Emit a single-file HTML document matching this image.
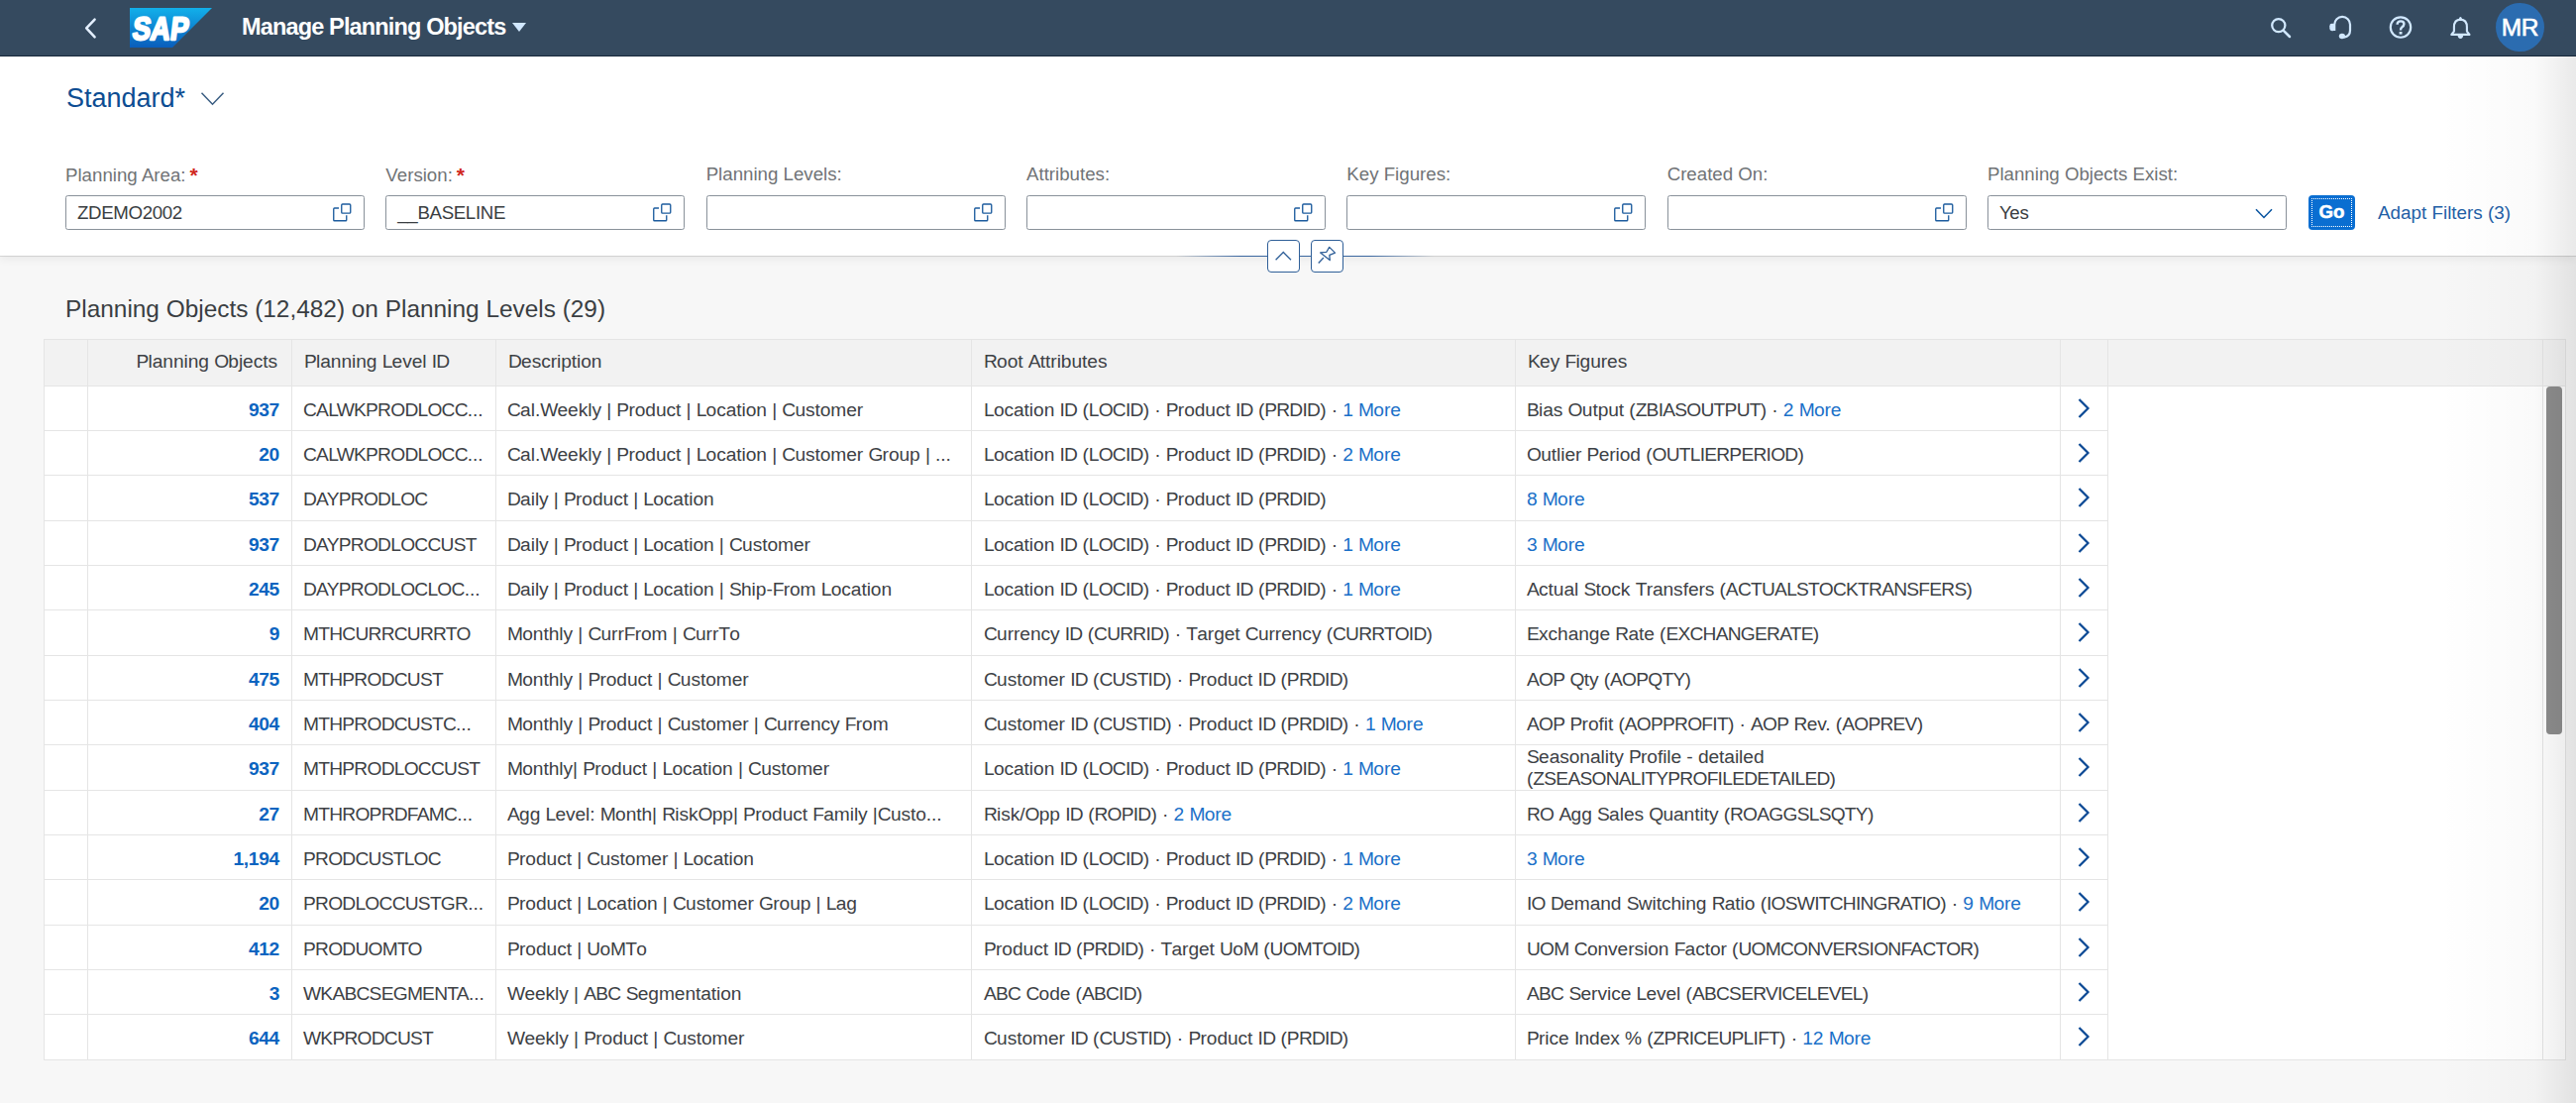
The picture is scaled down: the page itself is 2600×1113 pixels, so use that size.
<!DOCTYPE html>
<html><head><meta charset="utf-8">
<style>
*{box-sizing:border-box;margin:0;padding:0}
html,body{width:2600px;height:1113px;overflow:hidden;background:#f7f7f7;font-family:"Liberation Sans",sans-serif;color:#32363a}
.abs{position:absolute}
#shell{position:absolute;left:0;top:0;width:2600px;height:57px;background:#354a5f;border-bottom:1px solid #17283a}
#hdr{position:absolute;left:0;top:57px;width:2600px;height:201px;background:#fff;box-shadow:0 1px 0 rgba(0,0,0,0.115),0 3px 9px rgba(0,0,0,0.065)}
.lbl{position:absolute;top:165px;font-size:18.7px;color:#707376;white-space:nowrap;line-height:22px}
.req{color:#d0271d;font-size:21px;font-weight:bold;line-height:22px;margin-left:4px;position:relative;top:1px}
.inp{position:absolute;top:197px;width:302px;height:35px;border:1px solid #89919a;border-radius:2.5px;background:#fff}
.inp .v{position:absolute;left:11px;top:6px;font-size:18.7px;line-height:22px;color:#3a3e42;letter-spacing:-0.35px}
.vh{position:absolute;right:12px;top:7px;width:20px;height:20px}

.ttl{position:absolute;left:66px;top:296.5px;font-size:24.4px;line-height:30px;color:#3a3e42;white-space:nowrap;letter-spacing:0px}
.th{position:absolute;background:#f2f2f2;border-top:1px solid #e5e5e5;border-bottom:1px solid #e5e5e5}
#tblbody{position:absolute;left:44px;top:390px;width:2546px;height:680px;background:#fff;border-bottom:1px solid #e5e5e5}
.vl{position:absolute;width:1px;background:#e5e5e5}
.ht{position:absolute;top:354px;font-size:19.2px;line-height:22px;letter-spacing:-0.08px;color:#3d4145;white-space:nowrap}
.tr{position:absolute;left:44px;width:2084px;border-bottom:1px solid #e5e5e5}
.td{position:absolute;top:12.7px;font-size:19.2px;line-height:22px;letter-spacing:-0.08px;color:#3d4145;white-space:nowrap}
.td.two{top:1px;line-height:21.6px}
.num{position:absolute;left:44px;top:12.7px;text-align:right;font-size:19.2px;line-height:22px;letter-spacing:-0.3px;font-weight:bold;color:#0b64c0;white-space:nowrap}
.lk{color:#1a70c8}
i{font-style:normal;letter-spacing:-0.75px}
.nav{position:absolute;left:2052px;top:11px;width:14px;height:22px}
.sb{position:absolute;left:2570px;top:390px;width:16px;height:351px;background:#8d8d8d;border-radius:4px}
#edge{position:absolute;left:2460px;top:57px;width:140px;height:1056px;background:linear-gradient(to right,rgba(0,0,0,0) 0%,rgba(0,0,0,0.02) 70%,rgba(0,0,0,0.085) 100%)}
</style></head>
<body>
<div id="shell">
  <svg class="abs" style="left:84px;top:17px" width="14" height="23" viewBox="0 0 14 23"><path d="M11.6 2.6 L3.2 11.4 L11.6 20.4" fill="none" stroke="#e4f0ff" stroke-width="2.5" stroke-linecap="round" stroke-linejoin="round"/></svg>
  <svg class="abs" style="left:131px;top:8px" width="84" height="40" viewBox="0 0 84 40">
    <defs><linearGradient id="sg" x1="0" y1="0" x2="0" y2="1"><stop offset="0" stop-color="#12b0ea"/><stop offset="1" stop-color="#0a5dbb"/></linearGradient></defs>
    <path d="M0 0 H83 L43 40 H0 Z" fill="url(#sg)"/><text x="5.6" y="31.6" transform="skewX(-7)" font-family="Liberation Sans" font-weight="bold" font-size="32.5" fill="#fff" stroke="#fff" stroke-width="2.3" stroke-linejoin="round" textLength="56.5" lengthAdjust="spacingAndGlyphs">SAP</text>
  </svg>
  <div class="abs" style="left:244px;top:13px;font-size:23.5px;letter-spacing:-0.85px;font-weight:bold;color:#fff;line-height:28px;white-space:nowrap">Manage Planning Objects</div>
  <svg class="abs" style="left:517px;top:23px" width="14" height="9" viewBox="0 0 14 9"><path d="M0 0 H14 L7 9 Z" fill="#d1e8ff"/></svg>
  <svg class="abs" style="left:2285px;top:10px" width="35" height="35" viewBox="0 0 35 35"><circle cx="14.8" cy="15.6" r="6.6" fill="none" stroke="#d1e8ff" stroke-width="2.25"/><path d="M19.8 20.8 L26 27" stroke="#d1e8ff" stroke-width="2.5" stroke-linecap="round"/></svg>
  <svg class="abs" style="left:2345px;top:10px" width="35" height="35" viewBox="0 0 35 35"><path d="M11.2 21 V14.8 A7.9 7.9 0 0 1 27 14.8 V20.5 Q27 26.6 21 27.6" fill="none" stroke="#d1e8ff" stroke-width="2.2"/><rect x="6.3" y="13.8" width="5.6" height="7.4" rx="2.4" fill="#d1e8ff"/><ellipse cx="18.9" cy="26.5" rx="3.1" ry="2.7" fill="#d1e8ff"/></svg>
  <svg class="abs" style="left:2405px;top:10px" width="35" height="35" viewBox="0 0 35 35"><circle cx="18" cy="17.55" r="10.2" fill="none" stroke="#d1e8ff" stroke-width="2.2"/><path d="M14.6 14.8 Q14.6 11.4 18.1 11.4 Q21.4 11.4 21.4 14.3 Q21.4 16.2 19.3 17.4 Q18 18.2 18 20.4" fill="none" stroke="#d1e8ff" stroke-width="2.4" stroke-linecap="butt"/><rect x="16.6" y="22" width="2.9" height="2.6" fill="#d1e8ff"/></svg>
  <svg class="abs" style="left:2465px;top:10px" width="35" height="35" viewBox="0 0 35 35"><path d="M16.6 10.6 Q17 7 18.4 7 Q19.8 7 20.2 10.6 Z" fill="#d1e8ff"/><path d="M18.4 9.6 Q24.9 9.9 24.9 17.3 V21.6 L27.5 24.9 H9.3 L11.9 21.6 V17.3 Q11.9 9.9 18.4 9.6 Z" fill="none" stroke="#d1e8ff" stroke-width="2.1" stroke-linejoin="round"/><path d="M15.6 25.8 H21.2 Q21 28.9 18.4 28.9 Q15.8 28.9 15.6 25.8 Z" fill="#d1e8ff"/></svg>
  <div class="abs" style="left:2519px;top:3px;width:49px;height:49px;border-radius:50%;background:#2b6cb0"></div>
  <div class="abs" style="left:2519px;top:12.5px;width:49px;text-align:center;font-size:24.5px;line-height:30px;color:#fff;letter-spacing:-0.3px;-webkit-text-stroke:0.6px #fff">MR</div>
</div>
<div id="hdr"></div>
<div class="abs" style="left:67px;top:83px;font-size:27px;line-height:32px;color:#0d4d92;white-space:nowrap">Standard*</div>
<svg class="abs" style="left:202px;top:92px" width="25" height="16" viewBox="0 0 25 16"><path d="M1.5 1.8 L12.5 13.2 L23.5 1.8" fill="none" stroke="#3a5d82" stroke-width="1.5"/></svg>
<div class="lbl" style="left:66.0px">Planning Area:<span class="req">*</span></div>
<div class="inp" style="left:66.0px"><div class="v">ZDEMO2002</div><svg class="vh" viewBox="0 0 20 20"><path d="M7 5 H2.6 Q1.75 5 1.75 5.9 V16.9 Q1.75 17.75 2.6 17.75 H13.9 Q14.75 17.75 14.75 16.9 V12.3" fill="none" stroke="#1d5c9e" stroke-width="1.35"/><rect x="9.75" y="0.95" width="9" height="9.2" rx="1" fill="none" stroke="#1d5c9e" stroke-width="1.35"/></svg></div>
<div class="lbl" style="left:389.33px">Version:<span class="req">*</span></div>
<div class="inp" style="left:389.33px"><div class="v">__BASELINE</div><svg class="vh" viewBox="0 0 20 20"><path d="M7 5 H2.6 Q1.75 5 1.75 5.9 V16.9 Q1.75 17.75 2.6 17.75 H13.9 Q14.75 17.75 14.75 16.9 V12.3" fill="none" stroke="#1d5c9e" stroke-width="1.35"/><rect x="9.75" y="0.95" width="9" height="9.2" rx="1" fill="none" stroke="#1d5c9e" stroke-width="1.35"/></svg></div>
<div class="lbl" style="left:712.66px">Planning Levels:</div>
<div class="inp" style="left:712.66px"><svg class="vh" viewBox="0 0 20 20"><path d="M7 5 H2.6 Q1.75 5 1.75 5.9 V16.9 Q1.75 17.75 2.6 17.75 H13.9 Q14.75 17.75 14.75 16.9 V12.3" fill="none" stroke="#1d5c9e" stroke-width="1.35"/><rect x="9.75" y="0.95" width="9" height="9.2" rx="1" fill="none" stroke="#1d5c9e" stroke-width="1.35"/></svg></div>
<div class="lbl" style="left:1035.99px">Attributes:</div>
<div class="inp" style="left:1035.99px"><svg class="vh" viewBox="0 0 20 20"><path d="M7 5 H2.6 Q1.75 5 1.75 5.9 V16.9 Q1.75 17.75 2.6 17.75 H13.9 Q14.75 17.75 14.75 16.9 V12.3" fill="none" stroke="#1d5c9e" stroke-width="1.35"/><rect x="9.75" y="0.95" width="9" height="9.2" rx="1" fill="none" stroke="#1d5c9e" stroke-width="1.35"/></svg></div>
<div class="lbl" style="left:1359.32px">Key Figures:</div>
<div class="inp" style="left:1359.32px"><svg class="vh" viewBox="0 0 20 20"><path d="M7 5 H2.6 Q1.75 5 1.75 5.9 V16.9 Q1.75 17.75 2.6 17.75 H13.9 Q14.75 17.75 14.75 16.9 V12.3" fill="none" stroke="#1d5c9e" stroke-width="1.35"/><rect x="9.75" y="0.95" width="9" height="9.2" rx="1" fill="none" stroke="#1d5c9e" stroke-width="1.35"/></svg></div>
<div class="lbl" style="left:1682.65px">Created On:</div>
<div class="inp" style="left:1682.65px"><svg class="vh" viewBox="0 0 20 20"><path d="M7 5 H2.6 Q1.75 5 1.75 5.9 V16.9 Q1.75 17.75 2.6 17.75 H13.9 Q14.75 17.75 14.75 16.9 V12.3" fill="none" stroke="#1d5c9e" stroke-width="1.35"/><rect x="9.75" y="0.95" width="9" height="9.2" rx="1" fill="none" stroke="#1d5c9e" stroke-width="1.35"/></svg></div>
<div class="lbl" style="left:2005.98px">Planning Objects Exist:</div>
<div class="inp" style="left:2005.98px"><div class="v">Yes</div><svg class="abs" style="right:13px;top:12px" width="18" height="11" viewBox="0 0 18 11"><path d="M1 1.2 L9 9.5 L17 1.2" fill="none" stroke="#0854a0" stroke-width="1.5"/></svg></div>
<div class="abs" style="left:2330px;top:197px;width:47px;height:35px;border-radius:4px;background:#0a6ed1"><div class="abs" style="left:3px;top:3px;right:3px;bottom:3px;border:1px dotted #fff;border-radius:1px"></div><div class="abs" style="left:0;top:6px;width:47px;text-align:center;font-size:18.7px;line-height:22px;font-weight:bold;color:#fff;-webkit-text-stroke:0.5px #fff">Go</div></div>
<div class="abs" style="left:2400px;top:204px;font-size:18.85px;line-height:22px;color:#1f5fa6;white-space:nowrap">Adapt Filters (3)</div>
<div class="abs" style="left:1187px;top:258px;width:260px;height:1px;background:linear-gradient(to right,rgba(47,95,152,0),#3b67a0 25%,#3b67a0 75%,rgba(47,95,152,0))"></div>
<div class="abs" style="left:1279px;top:242px;width:33px;height:33px;border:1px solid #2f5f98;border-radius:4px;background:#fff"><svg class="abs" style="left:6px;top:10px" width="19" height="11" viewBox="0 0 19 11"><path d="M1.6 9.2 L9.3 1.5 L17 9.2" fill="none" stroke="#2f5f98" stroke-width="1.3"/></svg></div>
<div class="abs" style="left:1323px;top:242px;width:33px;height:33px;border:1px solid #2f5f98;border-radius:4px;background:#fff"><svg class="abs" style="left:5px;top:5px" width="22" height="22" viewBox="0 0 22 22"><path d="M12.7 1.4 L18.5 7.1 L12.9 9.4 L13.2 14.6 L3.7 6.9 L9.9 6.3 Z" fill="none" stroke="#2f5f98" stroke-width="1.3" stroke-linejoin="round"/><path d="M6.9 12 L1.7 17.5" stroke="#2f5f98" stroke-width="1.3"/></svg></div>
<div class="ttl">Planning Objects (12,482) on Planning Levels (29)</div>
<div id="tbl">
<div id="tblbody"></div>
<div class="th" style="left:44px;top:342px;width:2545px;height:48px"></div>
<div class="vl" style="left:44px;top:343px;height:727px"></div>
<div class="vl" style="left:88px;top:343px;height:727px"></div>
<div class="vl" style="left:294px;top:343px;height:727px"></div>
<div class="vl" style="left:500px;top:343px;height:727px"></div>
<div class="vl" style="left:980px;top:343px;height:727px"></div>
<div class="vl" style="left:1529px;top:343px;height:727px"></div>
<div class="vl" style="left:2079px;top:343px;height:727px"></div>
<div class="vl" style="left:2127px;top:343px;height:727px"></div>
<div class="vl" style="left:2566px;top:343px;height:727px"></div>
<div class="vl" style="left:2589px;top:342px;height:728px"></div>
<div class="ht" style="left:88px;width:192px;text-align:right"><i>P</i>lanning <i>O</i>bjects</div>
<div class="ht" style="left:307px"><i>P</i>lanning <i>L</i>evel <i>ID</i></div>
<div class="ht" style="left:513px"><i>D</i>escription</div>
<div class="ht" style="left:993px"><i>R</i>oot <i>A</i>ttributes</div>
<div class="ht" style="left:1542px"><i>K</i>ey <i>F</i>igures</div>
<div class="tr" style="top:390px;height:45px">
<div class="num" style="width:194px">937</div>
<div class="td" style="left:262px"><i>CALWKPRODLOCC</i>...</div>
<div class="td" style="left:468px"><i>C</i>al.<i>W</i>eekly | <i>P</i>roduct | <i>L</i>ocation | <i>C</i>ustomer</div>
<div class="td" style="left:949px"><i>L</i>ocation <i>ID</i> (<i>LOCID</i>) · <i>P</i>roduct <i>ID</i> (<i>PRDID</i>) · <span class="lk">1 <i>M</i>ore</span></div>
<div class="td" style="left:1497px"><i>B</i>ias <i>O</i>utput (<i>ZBIASOUTPUT</i>) · <span class="lk">2 <i>M</i>ore</span></div>
<svg class="nav" viewBox="0 0 14 22"><path d="M2.5 2 L11.5 11 L2.5 20" fill="none" stroke="#0a4894" stroke-width="2.2"/></svg>
</div>
<div class="tr" style="top:435px;height:45px">
<div class="num" style="width:194px">20</div>
<div class="td" style="left:262px"><i>CALWKPRODLOCC</i>...</div>
<div class="td" style="left:468px"><i>C</i>al.<i>W</i>eekly | <i>P</i>roduct | <i>L</i>ocation | <i>C</i>ustomer <i>G</i>roup | ...</div>
<div class="td" style="left:949px"><i>L</i>ocation <i>ID</i> (<i>LOCID</i>) · <i>P</i>roduct <i>ID</i> (<i>PRDID</i>) · <span class="lk">2 <i>M</i>ore</span></div>
<div class="td" style="left:1497px"><i>O</i>utlier <i>P</i>eriod (<i>OUTLIERPERIOD</i>)</div>
<svg class="nav" viewBox="0 0 14 22"><path d="M2.5 2 L11.5 11 L2.5 20" fill="none" stroke="#0a4894" stroke-width="2.2"/></svg>
</div>
<div class="tr" style="top:480px;height:46px">
<div class="num" style="width:194px">537</div>
<div class="td" style="left:262px"><i>DAYPRODLOC</i></div>
<div class="td" style="left:468px"><i>D</i>aily | <i>P</i>roduct | <i>L</i>ocation</div>
<div class="td" style="left:949px"><i>L</i>ocation <i>ID</i> (<i>LOCID</i>) · <i>P</i>roduct <i>ID</i> (<i>PRDID</i>)</div>
<div class="td" style="left:1497px"><span class="lk">8 <i>M</i>ore</span></div>
<svg class="nav" viewBox="0 0 14 22"><path d="M2.5 2 L11.5 11 L2.5 20" fill="none" stroke="#0a4894" stroke-width="2.2"/></svg>
</div>
<div class="tr" style="top:526px;height:45px">
<div class="num" style="width:194px">937</div>
<div class="td" style="left:262px"><i>DAYPRODLOCCUST</i></div>
<div class="td" style="left:468px"><i>D</i>aily | <i>P</i>roduct | <i>L</i>ocation | <i>C</i>ustomer</div>
<div class="td" style="left:949px"><i>L</i>ocation <i>ID</i> (<i>LOCID</i>) · <i>P</i>roduct <i>ID</i> (<i>PRDID</i>) · <span class="lk">1 <i>M</i>ore</span></div>
<div class="td" style="left:1497px"><span class="lk">3 <i>M</i>ore</span></div>
<svg class="nav" viewBox="0 0 14 22"><path d="M2.5 2 L11.5 11 L2.5 20" fill="none" stroke="#0a4894" stroke-width="2.2"/></svg>
</div>
<div class="tr" style="top:571px;height:45px">
<div class="num" style="width:194px">245</div>
<div class="td" style="left:262px"><i>DAYPRODLOCLOC</i>...</div>
<div class="td" style="left:468px"><i>D</i>aily | <i>P</i>roduct | <i>L</i>ocation | <i>S</i>hip-<i>F</i>rom <i>L</i>ocation</div>
<div class="td" style="left:949px"><i>L</i>ocation <i>ID</i> (<i>LOCID</i>) · <i>P</i>roduct <i>ID</i> (<i>PRDID</i>) · <span class="lk">1 <i>M</i>ore</span></div>
<div class="td" style="left:1497px"><i>A</i>ctual <i>S</i>tock <i>T</i>ransfers (<i>ACTUALSTOCKTRANSFERS</i>)</div>
<svg class="nav" viewBox="0 0 14 22"><path d="M2.5 2 L11.5 11 L2.5 20" fill="none" stroke="#0a4894" stroke-width="2.2"/></svg>
</div>
<div class="tr" style="top:616px;height:46px">
<div class="num" style="width:194px">9</div>
<div class="td" style="left:262px"><i>MTHCURRCURRTO</i></div>
<div class="td" style="left:468px"><i>M</i>onthly | <i>C</i>urr<i>F</i>rom | <i>C</i>urr<i>T</i>o</div>
<div class="td" style="left:949px"><i>C</i>urrency <i>ID</i> (<i>CURRID</i>) · <i>T</i>arget <i>C</i>urrency (<i>CURRTOID</i>)</div>
<div class="td" style="left:1497px"><i>E</i>xchange <i>R</i>ate (<i>EXCHANGERATE</i>)</div>
<svg class="nav" viewBox="0 0 14 22"><path d="M2.5 2 L11.5 11 L2.5 20" fill="none" stroke="#0a4894" stroke-width="2.2"/></svg>
</div>
<div class="tr" style="top:662px;height:45px">
<div class="num" style="width:194px">475</div>
<div class="td" style="left:262px"><i>MTHPRODCUST</i></div>
<div class="td" style="left:468px"><i>M</i>onthly | <i>P</i>roduct | <i>C</i>ustomer</div>
<div class="td" style="left:949px"><i>C</i>ustomer <i>ID</i> (<i>CUSTID</i>) · <i>P</i>roduct <i>ID</i> (<i>PRDID</i>)</div>
<div class="td" style="left:1497px"><i>AOP</i> <i>Q</i>ty (<i>AOPQTY</i>)</div>
<svg class="nav" viewBox="0 0 14 22"><path d="M2.5 2 L11.5 11 L2.5 20" fill="none" stroke="#0a4894" stroke-width="2.2"/></svg>
</div>
<div class="tr" style="top:707px;height:45px">
<div class="num" style="width:194px">404</div>
<div class="td" style="left:262px"><i>MTHPRODCUSTC</i>...</div>
<div class="td" style="left:468px"><i>M</i>onthly | <i>P</i>roduct | <i>C</i>ustomer | <i>C</i>urrency <i>F</i>rom</div>
<div class="td" style="left:949px"><i>C</i>ustomer <i>ID</i> (<i>CUSTID</i>) · <i>P</i>roduct <i>ID</i> (<i>PRDID</i>) · <span class="lk">1 <i>M</i>ore</span></div>
<div class="td" style="left:1497px"><i>AOP</i> <i>P</i>rofit (<i>AOPPROFIT</i>) · <i>AOP</i> <i>R</i>ev. (<i>AOPREV</i>)</div>
<svg class="nav" viewBox="0 0 14 22"><path d="M2.5 2 L11.5 11 L2.5 20" fill="none" stroke="#0a4894" stroke-width="2.2"/></svg>
</div>
<div class="tr" style="top:752px;height:46px">
<div class="num" style="width:194px">937</div>
<div class="td" style="left:262px"><i>MTHPRODLOCCUST</i></div>
<div class="td" style="left:468px"><i>M</i>onthly| <i>P</i>roduct | <i>L</i>ocation | <i>C</i>ustomer</div>
<div class="td" style="left:949px"><i>L</i>ocation <i>ID</i> (<i>LOCID</i>) · <i>P</i>roduct <i>ID</i> (<i>PRDID</i>) · <span class="lk">1 <i>M</i>ore</span></div>
<div class="td two" style="left:1497px"><i>S</i>easonality <i>P</i>rofile - detailed<br>(<i>ZSEASONALITYPROFILEDETAILED</i>)</div>
<svg class="nav" viewBox="0 0 14 22"><path d="M2.5 2 L11.5 11 L2.5 20" fill="none" stroke="#0a4894" stroke-width="2.2"/></svg>
</div>
<div class="tr" style="top:798px;height:45px">
<div class="num" style="width:194px">27</div>
<div class="td" style="left:262px"><i>MTHROPRDFAMC</i>...</div>
<div class="td" style="left:468px"><i>A</i>gg <i>L</i>evel: <i>M</i>onth| <i>R</i>isk<i>O</i>pp| <i>P</i>roduct <i>F</i>amily |<i>C</i>usto...</div>
<div class="td" style="left:949px"><i>R</i>isk/<i>O</i>pp <i>ID</i> (<i>ROPID</i>) · <span class="lk">2 <i>M</i>ore</span></div>
<div class="td" style="left:1497px"><i>RO</i> <i>A</i>gg <i>S</i>ales <i>Q</i>uantity (<i>ROAGGSLSQTY</i>)</div>
<svg class="nav" viewBox="0 0 14 22"><path d="M2.5 2 L11.5 11 L2.5 20" fill="none" stroke="#0a4894" stroke-width="2.2"/></svg>
</div>
<div class="tr" style="top:843px;height:45px">
<div class="num" style="width:194px">1,194</div>
<div class="td" style="left:262px"><i>PRODCUSTLOC</i></div>
<div class="td" style="left:468px"><i>P</i>roduct | <i>C</i>ustomer | <i>L</i>ocation</div>
<div class="td" style="left:949px"><i>L</i>ocation <i>ID</i> (<i>LOCID</i>) · <i>P</i>roduct <i>ID</i> (<i>PRDID</i>) · <span class="lk">1 <i>M</i>ore</span></div>
<div class="td" style="left:1497px"><span class="lk">3 <i>M</i>ore</span></div>
<svg class="nav" viewBox="0 0 14 22"><path d="M2.5 2 L11.5 11 L2.5 20" fill="none" stroke="#0a4894" stroke-width="2.2"/></svg>
</div>
<div class="tr" style="top:888px;height:46px">
<div class="num" style="width:194px">20</div>
<div class="td" style="left:262px"><i>PRODLOCCUSTGR</i>...</div>
<div class="td" style="left:468px"><i>P</i>roduct | <i>L</i>ocation | <i>C</i>ustomer <i>G</i>roup | <i>L</i>ag</div>
<div class="td" style="left:949px"><i>L</i>ocation <i>ID</i> (<i>LOCID</i>) · <i>P</i>roduct <i>ID</i> (<i>PRDID</i>) · <span class="lk">2 <i>M</i>ore</span></div>
<div class="td" style="left:1497px"><i>IO</i> <i>D</i>emand <i>S</i>witching <i>R</i>atio (<i>IOSWITCHINGRATIO</i>) · <span class="lk">9 <i>M</i>ore</span></div>
<svg class="nav" viewBox="0 0 14 22"><path d="M2.5 2 L11.5 11 L2.5 20" fill="none" stroke="#0a4894" stroke-width="2.2"/></svg>
</div>
<div class="tr" style="top:934px;height:45px">
<div class="num" style="width:194px">412</div>
<div class="td" style="left:262px"><i>PRODUOMTO</i></div>
<div class="td" style="left:468px"><i>P</i>roduct | <i>U</i>o<i>MT</i>o</div>
<div class="td" style="left:949px"><i>P</i>roduct <i>ID</i> (<i>PRDID</i>) · <i>T</i>arget <i>U</i>o<i>M</i> (<i>UOMTOID</i>)</div>
<div class="td" style="left:1497px"><i>UOM</i> <i>C</i>onversion <i>F</i>actor (<i>UOMCONVERSIONFACTOR</i>)</div>
<svg class="nav" viewBox="0 0 14 22"><path d="M2.5 2 L11.5 11 L2.5 20" fill="none" stroke="#0a4894" stroke-width="2.2"/></svg>
</div>
<div class="tr" style="top:979px;height:45px">
<div class="num" style="width:194px">3</div>
<div class="td" style="left:262px"><i>WKABCSEGMENTA</i>...</div>
<div class="td" style="left:468px"><i>W</i>eekly | <i>ABC</i> <i>S</i>egmentation</div>
<div class="td" style="left:949px"><i>ABC</i> <i>C</i>ode (<i>ABCID</i>)</div>
<div class="td" style="left:1497px"><i>ABC</i> <i>S</i>ervice <i>L</i>evel (<i>ABCSERVICELEVEL</i>)</div>
<svg class="nav" viewBox="0 0 14 22"><path d="M2.5 2 L11.5 11 L2.5 20" fill="none" stroke="#0a4894" stroke-width="2.2"/></svg>
</div>
<div class="tr" style="top:1024px;height:46px">
<div class="num" style="width:194px">644</div>
<div class="td" style="left:262px"><i>WKPRODCUST</i></div>
<div class="td" style="left:468px"><i>W</i>eekly | <i>P</i>roduct | <i>C</i>ustomer</div>
<div class="td" style="left:949px"><i>C</i>ustomer <i>ID</i> (<i>CUSTID</i>) · <i>P</i>roduct <i>ID</i> (<i>PRDID</i>)</div>
<div class="td" style="left:1497px"><i>P</i>rice <i>I</i>ndex % (<i>ZPRICEUPLIFT</i>) · <span class="lk">12 <i>M</i>ore</span></div>
<svg class="nav" viewBox="0 0 14 22"><path d="M2.5 2 L11.5 11 L2.5 20" fill="none" stroke="#0a4894" stroke-width="2.2"/></svg>
</div>
<div class="sb"></div>
</div>
<div id="edge"></div>
</body></html>
